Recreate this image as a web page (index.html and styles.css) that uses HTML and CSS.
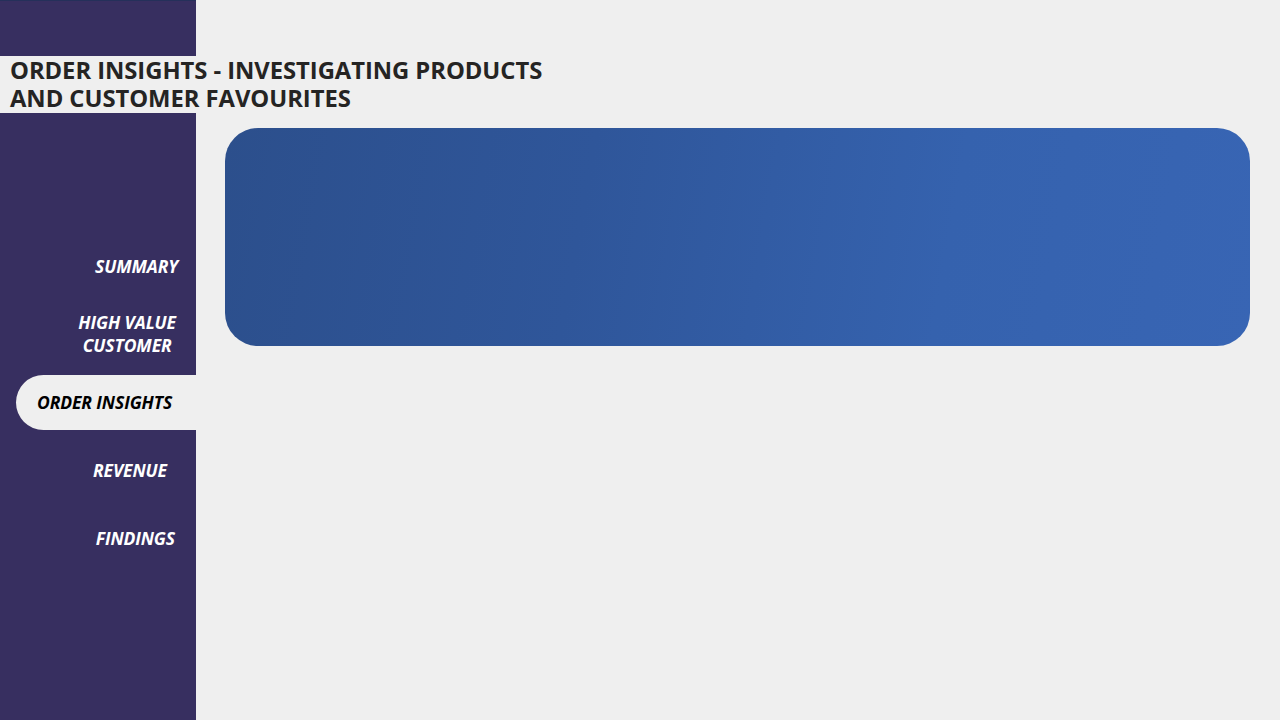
FILE: index.html
```html
<!DOCTYPE html>
<html>
<head>
<meta charset="utf-8">
<link rel="stylesheet" href="styles.css">
</head>
<body>
<div class="page">
  <aside class="sidebar">
    <nav class="nav">
      <div class="nav-item pr-18">SUMMARY</div>
      <div class="nav-item center-text pr-20">HIGH VALUE<br>CUSTOMER</div>
      <div class="nav-item active">ORDER INSIGHTS</div>
      <div class="nav-item pr-29">REVENUE</div>
      <div class="nav-item pr-21">FINDINGS</div>
    </nav>
  </aside>
  <main class="main">
    <div class="banner"></div>
  </main>
  <header class="title-bar">
    <h1 class="title"><span class="title-line">ORDER INSIGHTS - INVESTIGATING PRODUCTS</span><span class="title-line">AND CUSTOMER FAVOURITES</span></h1>
  </header>
</div>
</body>
</html>
```

FILE: styles.css
```css
html, body {
  margin: 0;
  padding: 0;
  width: 1280px;
  height: 720px;
  overflow: hidden;
  background: #efefef;
  font-family: "Open Sans", "Liberation Sans", sans-serif;
}
.page {
  position: relative;
  display: flex;
  width: 1280px;
  height: 720px;
}
.sidebar {
  width: 196px;
  flex: none;
  height: 720px;
  background: #372f60;
  border-top: 1px solid #25305a;
  box-sizing: border-box;
  padding-top: 237px;
}
.nav {
  display: flex;
  flex-direction: column;
  gap: 12px;
}
.nav-item {
  height: 56px;
  display: flex;
  align-items: center;
  justify-content: flex-end;
  color: #ffffff;
  font-style: italic;
  font-weight: 700;
  font-size: 17.5px;
  line-height: 23px;
  letter-spacing: -0.1px;
}
.center-text {
  text-align: center;
}
.pr-18 { padding-right: 18px; }
.pr-20 { padding-right: 20px; }
.pr-29 { padding-right: 29px; }
.pr-21 { padding-right: 21px; }
.nav-item.active {
  margin-left: 16px;
  height: 55px;
  margin-top: 1px;
  background: #efefef;
  color: #000000;
  border-radius: 28px 0 0 28px;
  justify-content: flex-start;
  padding-left: 21px;
}
.main {
  flex: 1;
  padding: 128px 30px 0 29px;
}
.banner {
  height: 218px;
  border-radius: 33px;
  background: linear-gradient(100deg, #2c4f8c 0%, #2f569a 35%, #3562ae 70%, #3865b4 100%);
}
.title-bar {
  position: absolute;
  top: 56px;
  left: 0;
  min-width: 196px;
  height: 57px;
  background: #efefef;
}
.title {
  margin: 0;
  padding: 0 0 0 10px;
  display: flex;
  flex-direction: column;
  white-space: nowrap;
  font-size: 23.8px;
  line-height: 28px;
  font-weight: 700;
  color: #252423;
  letter-spacing: -0.05px;
}
.title-line {
  display: block;
  height: 28px;
}
```
